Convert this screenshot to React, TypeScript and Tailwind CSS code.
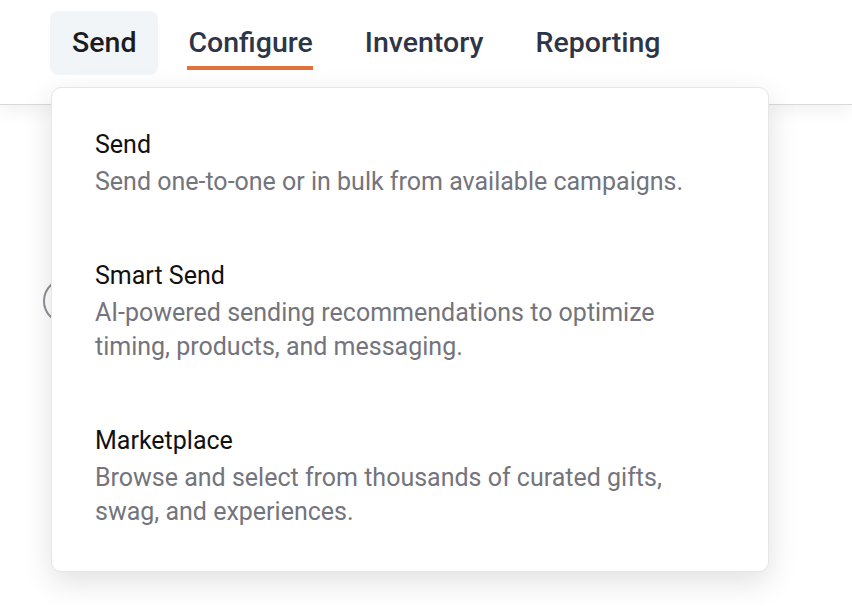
import React from 'react';

const navItems = ['Send', 'Configure', 'Inventory', 'Reporting'];

const menuItems = [
  { title: 'Send', desc: ['Send one-to-one or in bulk from available campaigns.'] },
  {
    title: 'Smart Send',
    desc: ['AI-powered sending recommendations to optimize', 'timing, products, and messaging.'],
  },
  {
    title: 'Marketplace',
    desc: ['Browse and select from thousands of curated gifts,', 'swag, and experiences.'],
  },
];

export default function App() {
  return (
    <div className="relative h-[606px] w-[852px] overflow-hidden bg-white font-['Roboto',sans-serif]">
      {/* Top nav */}
      <header className="h-[105px] border-b border-[#d9d9d9] bg-white shadow-[0_6px_16px_rgba(0,0,0,0.06)]">
        <nav className="flex gap-2 pl-[50px] pt-[11px]">
          {navItems.map((item, i) => (
            <div
              key={item}
              className={`relative flex h-16 items-center rounded-lg px-[22px] text-[28.5px] font-medium ${
                i === 0 ? 'bg-[#f2f5f7] text-[#1c1c1e]' : 'text-[#2d3648]'
              }`}
            >
              {item}
              {i === 1 && <span className="absolute bottom-[5px] left-[21px] right-[22px] h-1 bg-[#e2703a]" />}
            </div>
          ))}
        </nav>
      </header>

      {/* Page content behind the menu */}
      <div className="pl-[43px] pt-[173px]">
        <div className="h-[46px] w-[46px] rounded-full border-2 border-[#8e8f97]" />
      </div>

      {/* Dropdown */}
      <div className="absolute left-[51px] top-[87px] w-[718px] rounded-[10px] border border-[#e6e6e6] bg-white pb-[42px] pl-[43px] pt-[40px] shadow-[0_10px_30px_rgba(0,0,0,0.12)]">
        <div className="flex flex-col gap-[60px]">
          {menuItems.map((m) => (
            <div key={m.title} className="flex flex-col">
              <div className="text-[25px] leading-[34px] text-[#111111]">{m.title}</div>
              <div className="mt-[3px] text-[25px] leading-[34px] text-[#74747c]">
                {m.desc.map((d) => (
                  <div key={d}>{d}</div>
                ))}
              </div>
            </div>
          ))}
        </div>
      </div>
    </div>
  );
}
